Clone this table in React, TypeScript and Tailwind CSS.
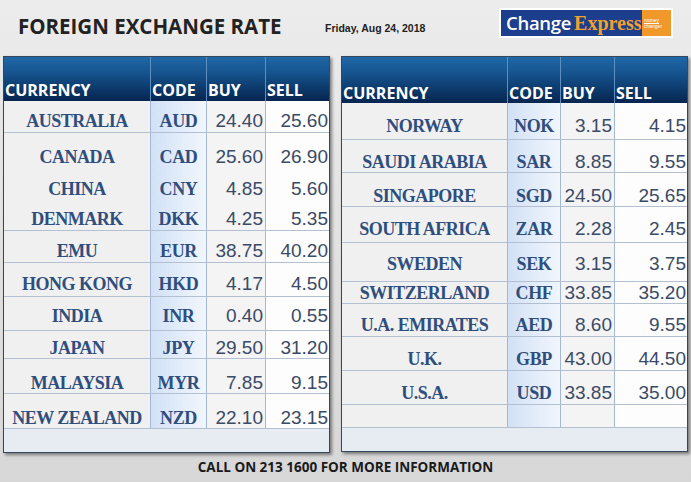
import React from 'react';

type Row = { name: string; code: string; buy: string; sell: string; h: number; off: number };

const leftRows: Row[] = [
  { name: 'AUSTRALIA', code: 'AUD', buy: '24.40', sell: '25.60', h: 32, off: 20 },
  { name: 'CANADA', code: 'CAD', buy: '25.60', sell: '26.90', h: 34, off: 24 },
  { name: 'CHINA', code: 'CNY', buy: '4.85', sell: '5.60', h: 31, off: 22 },
  { name: 'DENMARK', code: 'DKK', buy: '4.25', sell: '5.35', h: 33, off: 21 },
  { name: 'EMU', code: 'EUR', buy: '38.75', sell: '40.20', h: 32, off: 20 },
  { name: 'HONG KONG', code: 'HKD', buy: '4.17', sell: '4.50', h: 34, off: 21 },
  { name: 'INDIA', code: 'INR', buy: '0.40', sell: '0.55', h: 34, off: 19 },
  { name: 'JAPAN', code: 'JPY', buy: '29.50', sell: '31.20', h: 28, off: 17 },
  { name: 'MALAYSIA', code: 'MYR', buy: '7.85', sell: '9.15', h: 35, off: 24 },
  { name: 'NEW ZEALAND', code: 'NZD', buy: '22.10', sell: '23.15', h: 35, off: 24 },
];

const rightRows: Row[] = [
  { name: 'NORWAY', code: 'NOK', buy: '3.15', sell: '4.15', h: 37, off: 23 },
  { name: 'SAUDI ARABIA', code: 'SAR', buy: '8.85', sell: '9.55', h: 33, off: 22 },
  { name: 'SINGAPORE', code: 'SGD', buy: '24.50', sell: '25.65', h: 34, off: 23 },
  { name: 'SOUTH AFRICA', code: 'ZAR', buy: '2.28', sell: '2.45', h: 36, off: 22 },
  { name: 'SWEDEN', code: 'SEK', buy: '3.15', sell: '3.75', h: 39, off: 21 },
  { name: 'SWITZERLAND', code: 'CHF', buy: '33.85', sell: '35.20', h: 22, off: 11 },
  { name: 'U.A. EMIRATES', code: 'AED', buy: '8.60', sell: '9.55', h: 33, off: 21 },
  { name: 'U.K.', code: 'GBP', buy: '43.00', sell: '44.50', h: 34, off: 22 },
  { name: 'U.S.A.', code: 'USD', buy: '33.85', sell: '35.00', h: 34, off: 22 },
  { name: '', code: '', buy: '', sell: '', h: 23, off: 0 },
];

const serif = "font-['Liberation_Serif','Times_New_Roman',serif]";
const sans = "font-['Liberation_Sans',Arial,sans-serif]";
const head = "font-['Open_Sans','Noto_Sans',sans-serif]";

function Panel({ rows, cols, headH, headOff, stripH, width }: {
  rows: Row[]; cols: string; headH: number; headOff: number; stripH: number; width: string;
}) {
  return (
    <div className={`${width} border border-[#34475c] shadow-[2px_2px_3px_rgba(0,0,0,0.45)] bg-[#e7ecf2]`}>
      <div
        className={`grid ${cols} bg-[linear-gradient(to_bottom,#1f68a6_0%,#16548f_35%,#0d3a6c_70%,#072650_100%)] text-white ${head} font-bold text-[16px] leading-[20px]`}
        style={{ height: headH }}
      >
        {['CURRENCY', 'CODE', 'BUY', 'SELL'].map((t, i) => (
          <div
            key={t}
            className={`pl-[1px] ${i > 0 ? 'border-l border-[#5f8fc2]' : ''}`}
            style={{ paddingTop: headOff - 10 }}
          >
            {t}
          </div>
        ))}
      </div>
      {rows.map((r, idx) => (
        <div
          key={idx}
          className={`grid ${cols} border-b border-[#b2c0d2]`}
          style={{ height: r.h }}
        >
          <div
            className={`bg-[#f0f0f0] text-center ${serif} font-bold text-[18px] tracking-[-0.5px] leading-[20px] text-[#2f4e7d] whitespace-nowrap`}
            style={{ paddingTop: r.off - 10 }}
          >
            {r.name}
          </div>
          <div
            className={`border-l border-[#a3b8d6] bg-gradient-to-r from-[#d2e1f6] to-[#f1f6fd] text-center ${serif} font-bold text-[18px] tracking-[-0.4px] leading-[20px] text-[#2f4e7d]`}
            style={{ paddingTop: r.off - 10 }}
          >
            {r.code}
          </div>
          <div
            className={`border-l border-[#a3b8d6] bg-[#f4f4f4] text-right pr-[2px] ${sans} text-[19px] leading-[20px] text-[#3b4a66]`}
            style={{ paddingTop: r.off - 10 }}
          >
            {r.buy}
          </div>
          <div
            className={`border-l border-[#a3b8d6] bg-[#fdfdfd] text-right pr-[1px] ${sans} text-[19px] leading-[20px] text-[#3b4a66]`}
            style={{ paddingTop: r.off - 10 }}
          >
            {r.sell}
          </div>
        </div>
      ))}
      <div style={{ height: stripH }} />
    </div>
  );
}

export default function App() {
  return (
    <div className="w-[691px] h-[482px] overflow-hidden bg-gradient-to-b from-[#ececec] via-[#e2e2e2] to-[#d7d7d7]">
      <div className="flex h-[56px] items-start">
        <div className={`w-[325px] pl-[18px] pt-[11px] ${head} font-bold text-[20.5px] leading-[30px] text-[#222222] whitespace-nowrap`}>
          FOREIGN EXCHANGE RATE
        </div>
        <div className={`w-[174px] pt-[21px] ${sans} font-bold text-[10.5px] leading-[14px] text-[#222222] whitespace-nowrap`}>
          Friday, Aug 24, 2018
        </div>
        <div className="mt-[8px] flex h-[30px] w-[174px] border-2 border-white bg-[#1c3e8c]">
          <div className="flex flex-1 items-center pl-[5px] whitespace-nowrap">
            <span className={`${head} font-semibold text-[18.5px] leading-[22px] tracking-[-0.3px] text-white`}>Change</span>
            <span className={`${serif} ml-[3px] font-bold text-[20px] leading-[22px] text-[#f2a02e]`}>Express</span>
          </div>
          <div className={`flex w-[29px] flex-col justify-center bg-[#f0982a] pl-[2px] ${sans} text-[5px] leading-[6px] text-white`}>
            <span className="underline">money</span>
            <span>changer</span>
          </div>
        </div>
      </div>
      <div className="flex items-start gap-[11px] pl-[3px]">
        <Panel
          rows={leftRows}
          cols="grid-cols-[146px_56px_59px_1fr]"
          headH={44}
          headOff={33}
          stripH={23}
          width="w-[327px]"
        />
        <Panel
          rows={rightRows}
          cols="grid-cols-[165px_53px_54px_1fr]"
          headH={46}
          headOff={36}
          stripH={23}
          width="w-[347px]"
        />
      </div>
      <div className={`pt-[5px] text-center ${head} font-bold text-[13.5px] leading-[18px] text-[#1a1a1a]`}>
        CALL ON 213 1600 FOR MORE INFORMATION
      </div>
    </div>
  );
}
